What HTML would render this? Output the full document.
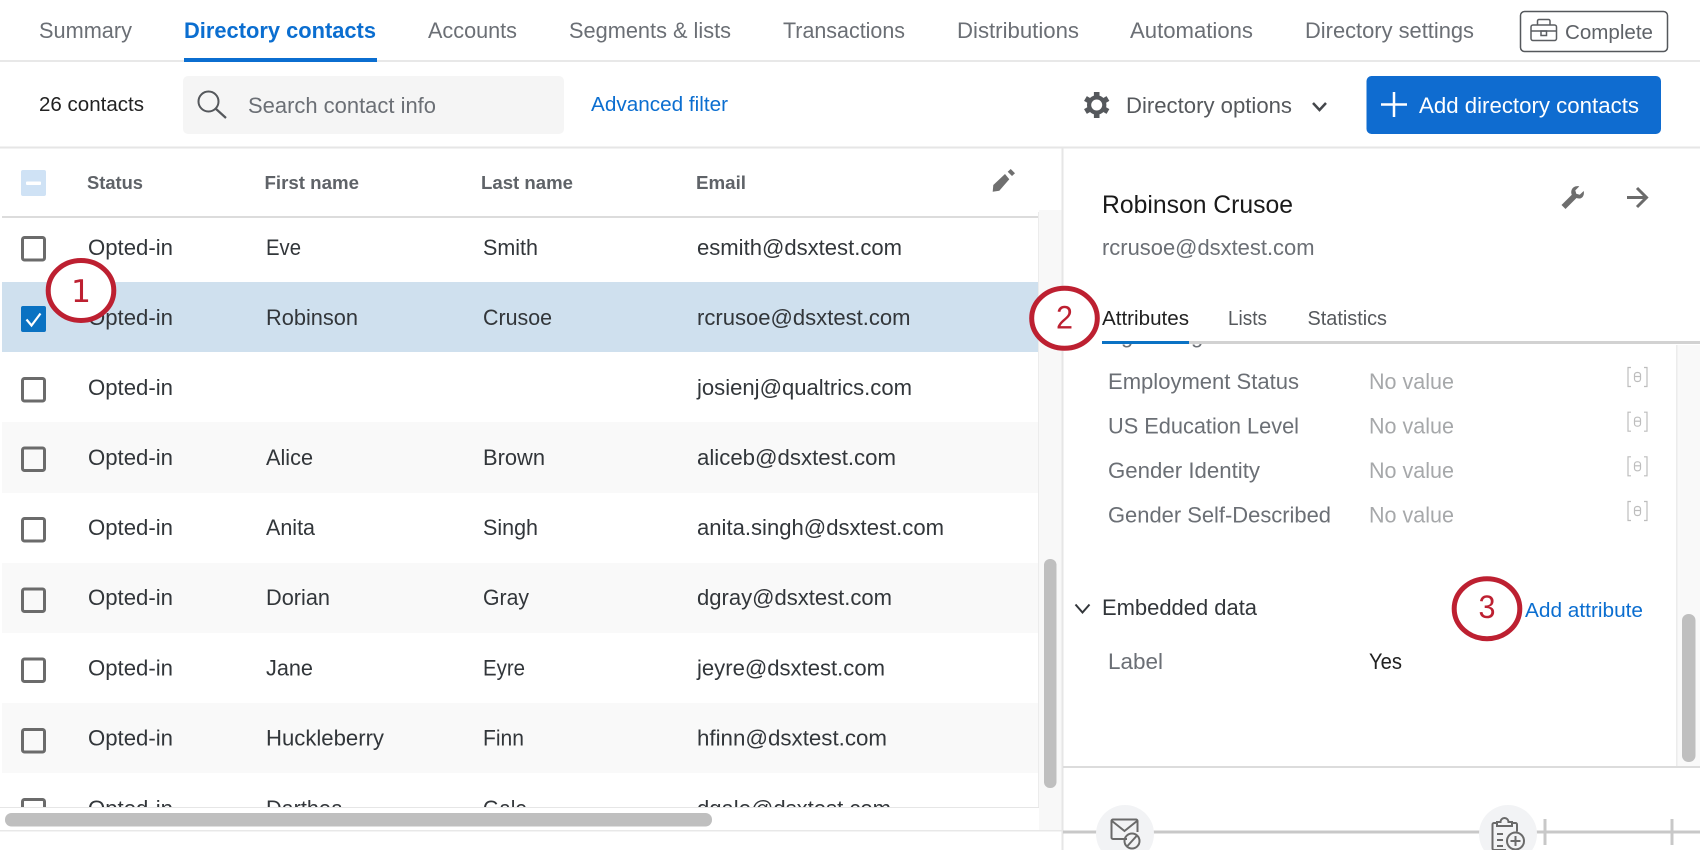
<!DOCTYPE html>
<html lang="en">
<head>
<meta charset="utf-8">
<title>Directory contacts</title>
<style>
html,body{margin:0;padding:0;background:#fff;width:1700px;height:850px;overflow:hidden}
svg{display:block}
text{font-family:"Liberation Sans",Arial,sans-serif;font-size:22px;fill:#32363a}
.nav{font-size:22px;fill:#6b6f75}
.hd{font-size:18.3px;font-weight:bold;fill:#5f6368}
.lb{fill:#6b6f75}
.nv{fill:#a6a8aa}
.bl{fill:#0b6ed0}
.dg{font-size:32px;fill:#bd2031}
</style>
</head>
<body>
<svg width="1700" height="850" viewBox="0 0 1700 850" xmlns="http://www.w3.org/2000/svg">
<defs>
<clipPath id="tb"><rect x="0" y="212" width="1038" height="595"/></clipPath>
<clipPath id="pn"><rect x="1063" y="344" width="614" height="423"/></clipPath>
</defs>
<rect width="1700" height="850" fill="#fff"/>

<!-- Top navigation -->
<text class="nav" x="39" y="38" textLength="93" lengthAdjust="spacingAndGlyphs">Summary</text>
<text class="nav" x="184" y="38" textLength="192" lengthAdjust="spacingAndGlyphs" style="font-weight:bold;fill:#0b6ed0">Directory contacts</text>
<text class="nav" x="428" y="38" textLength="89" lengthAdjust="spacingAndGlyphs">Accounts</text>
<text class="nav" x="569" y="38" textLength="162" lengthAdjust="spacingAndGlyphs">Segments &amp; lists</text>
<text class="nav" x="783" y="38" textLength="122" lengthAdjust="spacingAndGlyphs">Transactions</text>
<text class="nav" x="957" y="38" textLength="122" lengthAdjust="spacingAndGlyphs">Distributions</text>
<text class="nav" x="1130" y="38" textLength="123" lengthAdjust="spacingAndGlyphs">Automations</text>
<text class="nav" x="1305" y="38" textLength="169" lengthAdjust="spacingAndGlyphs">Directory settings</text>
<rect x="0" y="60" width="1700" height="2" fill="#e8e8e8"/>
<rect x="184" y="58" width="193" height="4" fill="#0b6ed0"/>

<!-- Complete button -->
<rect x="1520.5" y="11.5" width="147" height="40" rx="4" fill="#fff" stroke="#55585c" stroke-width="1.5"/>
<g fill="none" stroke="#5a5d61" stroke-width="1.5">
<rect x="1531" y="25" width="25.5" height="15.5" rx="2"/>
<path d="M1537.5 25v-4a1.5 1.5 0 0 1 1.5-1.5h9.5a1.5 1.5 0 0 1 1.5 1.5v4"/>
<path d="M1531 31h25.5"/>
<rect x="1541" y="31" width="5.5" height="4.5"/>
</g>
<text x="1565" y="39" textLength="88" lengthAdjust="spacingAndGlyphs" style="font-size:20.6px;fill:#5f6368">Complete</text>

<!-- Toolbar -->
<text x="39" y="111" textLength="105" lengthAdjust="spacingAndGlyphs" style="font-size:20.5px;fill:#222">26 contacts</text>
<rect x="183" y="76" width="381" height="58" rx="5" fill="#f5f5f5"/>
<circle cx="208.5" cy="101.5" r="10" fill="none" stroke="#55585c" stroke-width="2"/>
<path d="M215.5 108.5L226 118" fill="none" stroke="#55585c" stroke-width="2.2"/>
<text class="lb" x="248" y="113" textLength="188" lengthAdjust="spacingAndGlyphs">Search contact info</text>
<text class="bl" x="591" y="111" textLength="137" lengthAdjust="spacingAndGlyphs" style="font-size:20.7px">Advanced filter</text>

<!-- Gear -->
<g transform="translate(1096.7 105)" fill="#55585c">
<circle r="7.6" fill="none" stroke="#55585c" stroke-width="4.2"/>
<rect x="-2.8" y="-13" width="5.6" height="4.5"/>
<rect x="-2.8" y="-13" width="5.6" height="4.5" transform="rotate(60)"/>
<rect x="-2.8" y="-13" width="5.6" height="4.5" transform="rotate(120)"/>
<rect x="-2.8" y="-13" width="5.6" height="4.5" transform="rotate(180)"/>
<rect x="-2.8" y="-13" width="5.6" height="4.5" transform="rotate(240)"/>
<rect x="-2.8" y="-13" width="5.6" height="4.5" transform="rotate(300)"/>
</g>
<text x="1126" y="113" textLength="166" lengthAdjust="spacingAndGlyphs" style="fill:#55585c">Directory options</text>
<path d="M1313 103l6.5 7 6.5-7" fill="none" stroke="#44474b" stroke-width="2.5"/>

<!-- Add button -->
<rect x="1366.5" y="76" width="294.5" height="58" rx="5" fill="#0f6cd0"/>
<path d="M1394 92v25M1381 104.5h26" stroke="#fff" stroke-width="2.5" fill="none"/>
<text x="1419" y="113" textLength="220" lengthAdjust="spacingAndGlyphs" style="fill:#fff">Add directory contacts</text>
<rect x="0" y="146.5" width="1700" height="2" fill="#e6e6e6"/>

<!-- Table header -->
<rect x="21" y="170" width="25" height="26" rx="2" fill="#cfe2f5"/>
<rect x="26" y="181.5" width="15" height="3.5" rx="1" fill="#fff"/>
<text class="hd" x="87" y="189" textLength="56" lengthAdjust="spacingAndGlyphs">Status</text>
<text class="hd" x="264.5" y="189" textLength="94.5" lengthAdjust="spacingAndGlyphs">First name</text>
<text class="hd" x="481" y="189" textLength="92" lengthAdjust="spacingAndGlyphs">Last name</text>
<text class="hd" x="696" y="189" textLength="50" lengthAdjust="spacingAndGlyphs">Email</text>
<path d="M992.7 191.7l.6-6.7 11.7-11 4.3 5.300-10 11.400zM1007.700 171.700l3-2.700 4.300 4.300-3 2.700z" fill="#6f6f6f"/>

<!-- Scroll track -->
<rect x="1039" y="210" width="23" height="620" fill="#f8f8f8"/>

<!-- Rows -->
<g clip-path="url(#tb)">
<rect x="2" y="282" width="1036" height="70" fill="#cfe0ee"/>
<rect x="2" y="422" width="1036" height="71" fill="#f9f9f9"/>
<rect x="2" y="563" width="1036" height="70" fill="#f9f9f9"/>
<rect x="2" y="703" width="1036" height="70" fill="#f9f9f9"/>

<g fill="none" stroke="#6b6b6b" stroke-width="3">
<rect x="22.5" y="237.5" width="22" height="22.5" rx="2"/>
<rect x="22.5" y="378.5" width="22" height="22.5" rx="2"/>
<rect x="22.5" y="448" width="22" height="22.5" rx="2"/>
<rect x="22.5" y="518.5" width="22" height="22.5" rx="2"/>
<rect x="22.5" y="589" width="22" height="22.5" rx="2"/>
<rect x="22.5" y="659" width="22" height="22.5" rx="2"/>
<rect x="22.5" y="729.5" width="22" height="22.5" rx="2"/>
<rect x="22.5" y="799.5" width="22" height="22.5" rx="2"/>
</g>
<rect x="21" y="306" width="25" height="26" rx="2" fill="#0a72c2"/>
<path d="M26.5 319.5l5 6 9-12" fill="none" stroke="#fff" stroke-width="2.2"/>

<text x="88" y="255" textLength="85" lengthAdjust="spacingAndGlyphs">Opted-in</text>
<text x="266" y="255" textLength="35" lengthAdjust="spacingAndGlyphs">Eve</text>
<text x="483" y="255" textLength="55" lengthAdjust="spacingAndGlyphs">Smith</text>
<text x="697" y="255" textLength="205" lengthAdjust="spacingAndGlyphs">esmith@dsxtest.com</text>

<text x="88" y="325" textLength="85" lengthAdjust="spacingAndGlyphs">Opted-in</text>
<text x="266" y="325" textLength="92" lengthAdjust="spacingAndGlyphs">Robinson</text>
<text x="483" y="325" textLength="69" lengthAdjust="spacingAndGlyphs">Crusoe</text>
<text x="697" y="325" textLength="213.5" lengthAdjust="spacingAndGlyphs">rcrusoe@dsxtest.com</text>

<text x="88" y="395" textLength="85" lengthAdjust="spacingAndGlyphs">Opted-in</text>
<text x="697" y="395" textLength="215" lengthAdjust="spacingAndGlyphs">josienj@qualtrics.com</text>

<text x="88" y="465" textLength="85" lengthAdjust="spacingAndGlyphs">Opted-in</text>
<text x="266" y="465" textLength="47" lengthAdjust="spacingAndGlyphs">Alice</text>
<text x="483" y="465" textLength="62" lengthAdjust="spacingAndGlyphs">Brown</text>
<text x="697" y="465" textLength="199" lengthAdjust="spacingAndGlyphs">aliceb@dsxtest.com</text>

<text x="88" y="535" textLength="85" lengthAdjust="spacingAndGlyphs">Opted-in</text>
<text x="266" y="535" textLength="49" lengthAdjust="spacingAndGlyphs">Anita</text>
<text x="483" y="535" textLength="55" lengthAdjust="spacingAndGlyphs">Singh</text>
<text x="697" y="535" textLength="247" lengthAdjust="spacingAndGlyphs">anita.singh@dsxtest.com</text>

<text x="88" y="605" textLength="85" lengthAdjust="spacingAndGlyphs">Opted-in</text>
<text x="266" y="605" textLength="64" lengthAdjust="spacingAndGlyphs">Dorian</text>
<text x="483" y="605" textLength="46" lengthAdjust="spacingAndGlyphs">Gray</text>
<text x="697" y="605" textLength="195" lengthAdjust="spacingAndGlyphs">dgray@dsxtest.com</text>

<text x="88" y="675.5" textLength="85" lengthAdjust="spacingAndGlyphs">Opted-in</text>
<text x="266" y="675.5" textLength="47" lengthAdjust="spacingAndGlyphs">Jane</text>
<text x="483" y="675.5" textLength="42" lengthAdjust="spacingAndGlyphs">Eyre</text>
<text x="697" y="675.5" textLength="188" lengthAdjust="spacingAndGlyphs">jeyre@dsxtest.com</text>

<text x="88" y="745.5" textLength="85" lengthAdjust="spacingAndGlyphs">Opted-in</text>
<text x="266" y="745.5" textLength="118" lengthAdjust="spacingAndGlyphs">Huckleberry</text>
<text x="483" y="745.5" textLength="41" lengthAdjust="spacingAndGlyphs">Finn</text>
<text x="697" y="745.5" textLength="190" lengthAdjust="spacingAndGlyphs">hfinn@dsxtest.com</text>

<text x="88" y="816" textLength="85" lengthAdjust="spacingAndGlyphs">Opted-in</text>
<text x="266" y="816" textLength="77" lengthAdjust="spacingAndGlyphs">Darthea</text>
<text x="483" y="816" textLength="44" lengthAdjust="spacingAndGlyphs">Gale</text>
<text x="697" y="816" textLength="194" lengthAdjust="spacingAndGlyphs">dgale@dsxtest.com</text>
</g>

<rect x="2" y="216" width="1036" height="2" fill="#dcdcdc"/>
<rect x="1038" y="212" width="1" height="595" fill="#ececec"/>
<rect x="0" y="807" width="1039" height="1" fill="#e6e6e6"/>
<rect x="0" y="830" width="1062" height="1.5" fill="#e8e8e8"/>
<rect x="5" y="813" width="707" height="13.5" rx="6.5" fill="#bfbfbf"/>
<rect x="1044" y="559" width="12.5" height="229" rx="6" fill="#bfbfbf"/>

<!-- Right panel -->
<rect x="1061.5" y="148" width="2" height="702" fill="#e6e6e6"/>
<text x="1102" y="213" textLength="191" lengthAdjust="spacingAndGlyphs" style="font-size:24.7px;fill:#1a1a1a">Robinson Crusoe</text>
<text class="lb" x="1102" y="255" textLength="212.5" lengthAdjust="spacingAndGlyphs">rcrusoe@dsxtest.com</text>
<path d="M1561.5 205l4 4 11-11c3.500 1.200 6 .3 7.200-3.300.3-1.200.3-2.500 0-3.700l-4 3.800-3.400-1-1-3.400 4-4c-3.500-.8-6.500.5-7.800 3.800-.5 1.800-.3 3.300.3 4.500z" fill="#6e6e6e"/>
<path d="M1627 197.5h19.5M1637 188l9.5 9.500-9.500 9.500" fill="none" stroke="#6b6b6b" stroke-width="3"/>

<text x="1102" y="325" textLength="87" lengthAdjust="spacingAndGlyphs" style="font-size:20.6px;fill:#1f1f1f">Attributes</text>
<text x="1228" y="325" textLength="39" lengthAdjust="spacingAndGlyphs" style="font-size:20.6px;fill:#55585c">Lists</text>
<text x="1307.5" y="325" textLength="79.5" lengthAdjust="spacingAndGlyphs" style="font-size:20.6px;fill:#55585c">Statistics</text>

<g clip-path="url(#pn)">
<text class="lb" x="1121" y="343">g</text>
<text class="lb" x="1191" y="343">g</text>
<text class="lb" x="1108" y="389" textLength="191" lengthAdjust="spacingAndGlyphs">Employment Status</text>
<text class="nv" x="1369" y="389" textLength="85" lengthAdjust="spacingAndGlyphs">No value</text>
<text class="lb" x="1108" y="433.5" textLength="191" lengthAdjust="spacingAndGlyphs">US Education Level</text>
<text class="nv" x="1369" y="433.5" textLength="85" lengthAdjust="spacingAndGlyphs">No value</text>
<text class="lb" x="1108" y="478" textLength="152" lengthAdjust="spacingAndGlyphs">Gender Identity</text>
<text class="nv" x="1369" y="478" textLength="85" lengthAdjust="spacingAndGlyphs">No value</text>
<text class="lb" x="1108" y="522.5" textLength="223" lengthAdjust="spacingAndGlyphs">Gender Self-Described</text>
<text class="nv" x="1369" y="522.5" textLength="85" lengthAdjust="spacingAndGlyphs">No value</text>
</g>
<rect x="1102" y="341" width="598" height="3" fill="#d2d2d2"/>
<rect x="1102" y="341" width="87" height="3" fill="#0b72c4"/>

<g fill="none" stroke="#bdbdbd" stroke-width="1.2">
<g><path d="M1631 367.5h-3v19h3M1644 367.5h3v19h-3"/><rect x="1634.5" y="372.5" width="6" height="9" rx="2.5"/><path d="M1634.5 376.5h6"/></g>
<g transform="translate(0 44.7)"><path d="M1631 367.5h-3v19h3M1644 367.5h3v19h-3"/><rect x="1634.5" y="372.5" width="6" height="9" rx="2.5"/><path d="M1634.5 376.5h6"/></g>
<g transform="translate(0 89.3)"><path d="M1631 367.5h-3v19h3M1644 367.5h3v19h-3"/><rect x="1634.5" y="372.5" width="6" height="9" rx="2.5"/><path d="M1634.5 376.5h6"/></g>
<g transform="translate(0 134)"><path d="M1631 367.5h-3v19h3M1644 367.5h3v19h-3"/><rect x="1634.5" y="372.5" width="6" height="9" rx="2.5"/><path d="M1634.5 376.5h6"/></g>
</g>

<path d="M1075.5 604.5l7 8 7-8" fill="none" stroke="#32363a" stroke-width="2"/>
<text x="1102" y="615" textLength="155" lengthAdjust="spacingAndGlyphs">Embedded data</text>
<text class="bl" x="1525" y="617" textLength="118" lengthAdjust="spacingAndGlyphs" style="font-size:20.7px">Add attribute</text>
<text class="lb" x="1108" y="669" textLength="55" lengthAdjust="spacingAndGlyphs">Label</text>
<text x="1369" y="669" textLength="33" lengthAdjust="spacingAndGlyphs" style="fill:#222">Yes</text>

<!-- Panel scrollbar -->
<rect x="1677" y="345" width="23" height="422" fill="#f9f9f9"/>
<rect x="1676" y="345" width="1.5" height="422" fill="#ececec"/>
<rect x="1682" y="614" width="13.5" height="148" rx="6.5" fill="#bfbfbf"/>
<rect x="1063" y="766" width="637" height="2" fill="#dcdcdc"/>

<!-- Timeline -->
<rect x="1063" y="830.5" width="637" height="3" fill="#c8c8c8"/>
<rect x="1543.5" y="819" width="3" height="26" fill="#c8c8c8"/>
<rect x="1670.5" y="819" width="3" height="26" fill="#c8c8c8"/>
<circle cx="1125" cy="834" r="29" fill="#f2f3f5"/>
<circle cx="1508" cy="834" r="29" fill="#f2f3f5"/>
<g fill="none" stroke="#6a6a6a" stroke-width="2">
<path d="M1127 839h-14a1.500 1.500 0 0 1-1.500-1.500v-16.500a1.500 1.500 0 0 1 1.500-1.500h23a1.500 1.500 0 0 1 1.500 1.500v11"/>
<path d="M1112 821l12.500 10 12.500-10"/>
<circle cx="1132" cy="841" r="7.500"/>
<path d="M1127 846.500l10-11"/>
<path d="M1497 823h-3a1.500 1.500 0 0 0-1.500 1.500v24a1.500 1.500 0 0 0 1.500 1.500h12"/>
<path d="M1512 823h3.500a1.500 1.500 0 0 1 1.500 1.500v7"/>
<path d="M1497 826v-4h3.500a4 4 0 0 1 8 0h3.500v4z"/>
<path d="M1497 834h6M1497 840h6M1497 846h6"/>
<circle cx="1515.500" cy="841" r="8.500"/>
<path d="M1515.500 836v10M1510.500 841h10"/>
</g>

<!-- Annotations -->
<ellipse cx="81" cy="290.5" rx="32.8" ry="30" fill="#fff" stroke="#bd2031" stroke-width="5"/>
<text class="dg" x="71" y="302" textLength="20" lengthAdjust="spacingAndGlyphs" style="font-family:'DejaVu Sans',sans-serif;font-size:31px">1</text>
<ellipse cx="1064.5" cy="318.3" rx="32.8" ry="30" fill="#fff" stroke="#bd2031" stroke-width="5"/>
<text class="dg" x="1056" y="328.5" textLength="17" lengthAdjust="spacingAndGlyphs">2</text>
<ellipse cx="1487" cy="608.7" rx="32.8" ry="30" fill="#fff" stroke="#bd2031" stroke-width="5"/>
<text class="dg" x="1478.5" y="618" textLength="17" lengthAdjust="spacingAndGlyphs">3</text>
</svg>
</body>
</html>
